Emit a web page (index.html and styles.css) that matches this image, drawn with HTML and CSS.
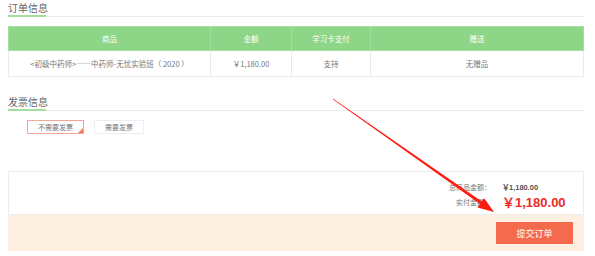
FILE: index.html
```html
<!DOCTYPE html>
<html lang="zh-CN">
<head>
    <meta charset="UTF-8">
    <meta name="viewport" content="width=device-width, initial-scale=1.0">
    <title>确认订单</title>
    <link rel="stylesheet" href="styles.css">
</head>
<body>
    <div class="page">
        <div class="section-title"><span>订单信息</span></div>
        <table class="order-table">
            <tr>
                <th class="col-goods">商品</th>
                <th class="col-price">金额</th>
                <th class="col-card">学习卡支付</th>
                <th>赠送</th>
            </tr>
            <tr>
                <td>&lt;初级中药师&gt;——中药师-无忧实验班（ 2020 ）</td>
                <td>￥1,180.00</td>
                <td>支持</td>
                <td>无赠品</td>
            </tr>
        </table>

        <div class="section-title invoice-title"><span>发票信息</span></div>
        <div class="invoice-options">
            <a class="invoice-btn active">不需要发票</a>
            <a class="invoice-btn">需要发票</a>
        </div>

        <div class="summary">
            <div class="summary-rows">
                <div class="summary-row">
                    <span class="label">总商品金额：</span>
                    <span class="value">￥1,180.00</span>
                </div>
                <div class="summary-row">
                    <span class="label">实付金额：</span>
                    <span class="value total">￥1,180.00</span>
                </div>
            </div>
            <div class="summary-bar">
                <button class="submit-btn">提交订单</button>
            </div>
        </div>

        <svg class="arrow" width="595" height="256" viewBox="0 0 595 256">
            <polygon points="332.8,99.2 480,204 477.5,207.4 494,212 484.2,198.2 481.8,201.6 333.2,98.8" fill="#ff1a12"/>
        </svg>
    </div>
</body>
</html>
```

FILE: styles.css
```css
* {
    box-sizing: border-box;
}

body {
    margin: 0;
    font-family: "Noto Sans CJK SC", "Liberation Sans", sans-serif;
    color: #666;
    background: #fff;
}

.page {
    position: relative;
    width: 595px;
    height: 256px;
    padding: 0 11px 0 8px;
    overflow: hidden;
}

.section-title {
    border-bottom: 1px solid #ececec;
    height: 17px;
    font-size: 10px;
    line-height: 15px;
    color: #666;
}

.section-title span {
    display: inline-block;
    width: 38px;
    height: 17px;
    border-bottom: 2px solid #a6dea0;
    white-space: nowrap;
}

.order-table {
    margin-top: 9px;
    width: 100%;
    border-collapse: collapse;
    font-size: 7.5px;
    text-align: center;
}

.order-table th {
    background: #8dd587;
    color: #fff;
    font-weight: normal;
    height: 24px;
    border: 1px solid #a6dea0;
    padding: 0;
}

.order-table td {
    height: 26px;
    border: 1px solid #e4eee4;
    color: #777;
    padding: 0;
}

.col-goods {
    width: 202px;
}

.col-price {
    width: 81px;
}

.col-card {
    width: 79px;
}

.invoice-title {
    margin-top: 17px;
}

.invoice-options {
    display: flex;
    gap: 10px;
    padding: 9px 0 0 19px;
}

.invoice-btn {
    position: relative;
    display: block;
    height: 14px;
    padding: 0 10px;
    font-size: 7px;
    line-height: 12px;
    color: #777;
    border: 1px solid #eee;
    overflow: hidden;
}

.invoice-btn.active {
    border-color: #f5a595;
    padding: 0 10px;
}

.invoice-btn.active::after {
    content: "";
    position: absolute;
    right: 0;
    bottom: 0;
    border-left: 5px solid transparent;
    border-bottom: 5px solid #f1785c;
}

.summary {
    margin-top: 37px;
}

.summary-rows {
    height: 44px;
    padding: 7px 21px 0 0;
    border: 1px solid #ececec;
}

.summary-row {
    display: flex;
    justify-content: flex-end;
    align-items: center;
    height: 15px;
}

.summary-row .label {
    font-size: 7px;
    color: #777;
    text-align: right;
    margin-right: 11px;
}

.summary-row .value {
    width: 60px;
    font-family: "Liberation Sans", sans-serif;
    font-size: 7.5px;
    font-weight: bold;
    color: #555;
}

.summary-row .value.total {
    font-size: 13px;
    color: #ee2a26;
}

.summary-bar {
    display: flex;
    justify-content: flex-end;
    height: 36px;
    padding: 7px 11px 0 0;
    background: #fdefe2;
}

.submit-btn {
    width: 77px;
    height: 22px;
    border: none;
    background: #f46a4c;
    color: #fff;
    font-family: "Noto Sans CJK SC", sans-serif;
    font-size: 9px;
    padding: 0;
}

.arrow {
    position: absolute;
    left: 0;
    top: 0;
    pointer-events: none;
}
```
